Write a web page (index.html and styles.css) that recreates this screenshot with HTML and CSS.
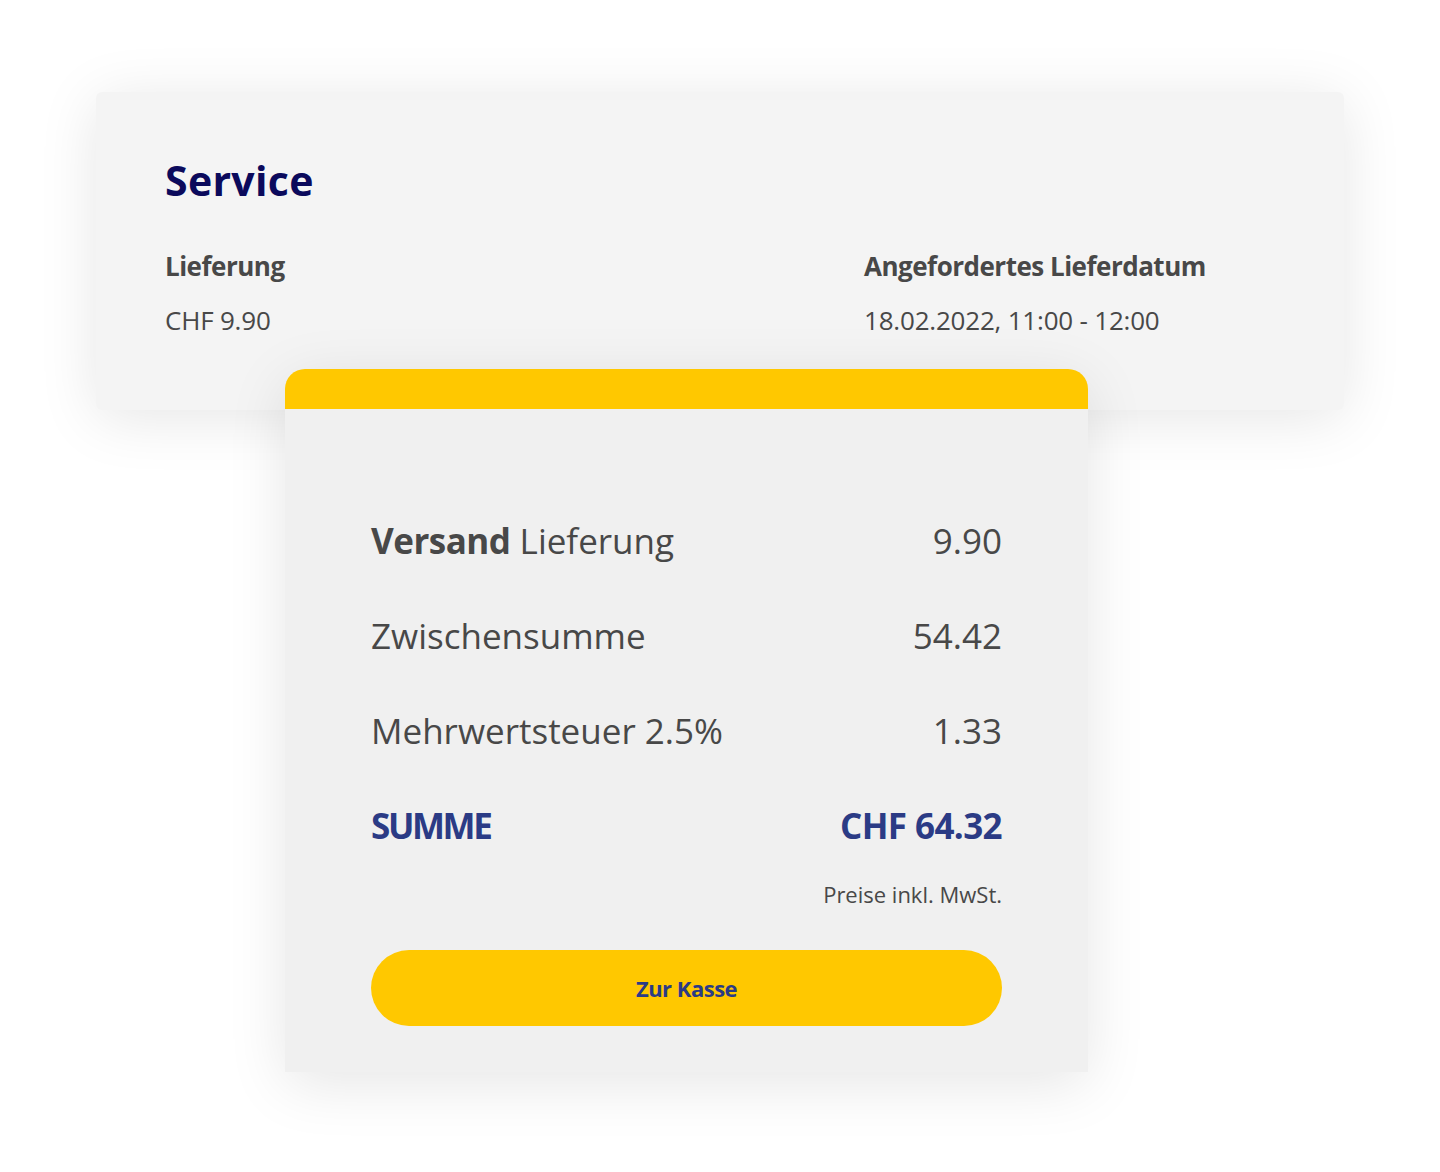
FILE: index.html
```html
<!DOCTYPE html>
<html lang="de">
<head>
<meta charset="utf-8">
<title>Service</title>
<link rel="stylesheet" href="styles.css">
</head>
<body>
<main class="page">
  <section class="service-card">
    <h1 class="service-title">Service</h1>
    <div class="service-grid">
      <div class="service-item">
        <h2 class="item-label">Lieferung</h2>
        <p class="item-value">CHF 9.90</p>
      </div>
      <div class="service-item">
        <h2 class="item-label">Angefordertes Lieferdatum</h2>
        <p class="item-value">18.02.2022, 11:00 - 12:00</p>
      </div>
    </div>
  </section>
  <section class="summary-card">
    <div class="summary-bar"></div>
    <div class="summary-body">
      <div class="row"><span><b class="strong">Versand</b> Lieferung</span><span>9.90</span></div>
      <div class="row"><span>Zwischensumme</span><span>54.42</span></div>
      <div class="row"><span>Mehrwertsteuer 2.5%</span><span>1.33</span></div>
      <div class="row total"><span class="total-label">SUMME</span><span class="total-value">CHF 64.32</span></div>
      <p class="note">Preise inkl. MwSt.</p>
      <button class="checkout" type="button">Zur Kasse</button>
    </div>
  </section>
</main>
</body>
</html>
```
FILE: styles.css
```css
* { box-sizing: border-box; }
html, body { margin: 0; padding: 0; background: #ffffff; }
body { font-family: "Open Sans", "Noto Sans", sans-serif; color: #484848; }
.page {
  width: 1440px;
  height: 1172px;
  padding-top: 92px;
  display: flex;
  flex-direction: column;
}
.service-card {
  margin-left: 96px;
  width: 1248px;
  height: 318px;
  background: #f4f4f4;
  border-radius: 6px;
  box-shadow: 0 8px 60px rgba(0, 0, 0, 0.1);
  padding: 60px 69px 0;
}
.service-title {
  margin: 0;
  font-size: 41px;
  line-height: 56px;
  font-weight: 700;
  color: #0b0a5c;
  letter-spacing: 0.3px;
}
.service-grid {
  margin-top: 42px;
  display: grid;
  grid-template-columns: 699px auto;
}
.item-label {
  margin: 0;
  font-size: 26px;
  line-height: 32px;
  font-weight: 700;
  color: #484848;
  letter-spacing: -0.5px;
}
.item-value {
  margin: 22px 0 0;
  font-size: 26px;
  line-height: 32px;
  color: #484848;
  letter-spacing: -0.2px;
}
.summary-card {
  position: relative;
  z-index: 1;
  margin-top: -41px;
  margin-left: 285px;
  width: 803px;
  background: #f0f0f0;
  border-radius: 20px 20px 0 0;
  box-shadow: 0 12px 60px rgba(0, 0, 0, 0.1);
}
.summary-bar {
  height: 40px;
  background: #ffc800;
  border-radius: 20px 20px 0 0;
}
.summary-body {
  padding: 108px 86px 46px;
  display: flex;
  flex-direction: column;
}
.row {
  display: flex;
  justify-content: space-between;
  align-items: center;
  height: 46px;
  font-size: 35px;
  letter-spacing: 0;
  color: #484848;
  margin-bottom: 49px;
}
.strong { font-weight: 700; letter-spacing: -0.5px; }
.total {
  font-weight: 700;
  color: #2b3b85;
  margin-bottom: 0;
}
.total-label { letter-spacing: -2.4px; }
.total-value { letter-spacing: -0.6px; }
.note {
  margin: 31px 0 0;
  text-align: right;
  font-size: 22px;
  line-height: 30px;
  color: #484848;
  letter-spacing: 0;
}
.checkout {
  margin-top: 41px;
  height: 76px;
  border: none;
  border-radius: 38px;
  background: #ffc800;
  color: #2b3b85;
  font-family: inherit;
  font-size: 22px;
  font-weight: 700;
  letter-spacing: -0.5px;
}
```
